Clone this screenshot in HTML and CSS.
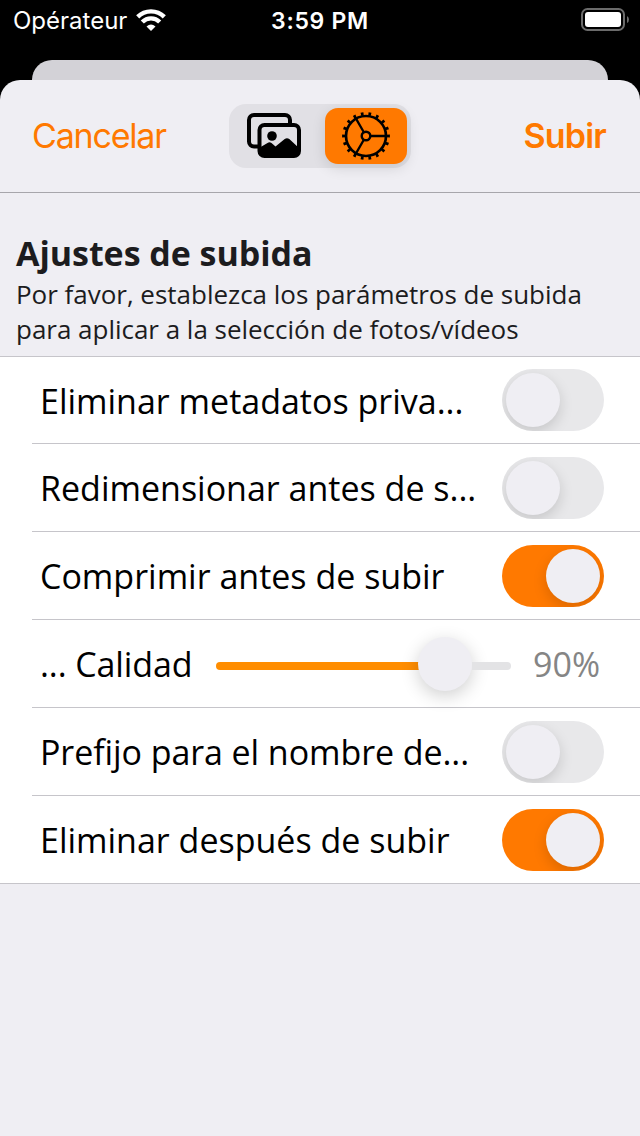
FILE: index.html
```html
<!DOCTYPE html>
<html lang="es">
<head>
<meta charset="utf-8">
<title>Ajustes de subida</title>
<link rel="stylesheet" href="styles.css">
</head>
<body>
<div class="status">
  <div class="carrier"><span class="carrier-name">Opérateur</span>
    <svg class="wifi" width="30" height="23" viewBox="0 0 30 23" fill="none" stroke="#fff">
      <path d="M1.700 7.900A18.800 18.800 0 0 1 28.300 7.900" stroke-width="4.400"/>
      <path d="M6.300 13A12.300 12.300 0 0 1 23.700 13" stroke-width="4.400"/>
      <path d="M15 22L10.500 17.500Q15 13.500 19.500 17.500Z" fill="#fff" stroke="none"/>
    </svg>
  </div>
  <div class="time">3:59 PM</div>
  <svg class="battery" width="50" height="24" viewBox="0 0 50 24">
    <rect x="1" y="1" width="42" height="21" rx="5.5" fill="none" stroke="#6b6b6b" stroke-width="2"/>
    <rect x="4" y="4" width="36" height="15" rx="3" fill="#fff"/>
    <path d="M46 8Q48 9 48 11.5T46 15Z" fill="#6b6b6b"/>
  </svg>
</div>
<div class="back-sheet"></div>
<main class="sheet">
  <header class="nav">
    <span class="cancel">Cancelar</span>
    <div class="segments">
      <div class="segment">
        <svg width="56" height="48" viewBox="0 0 56 48" fill="none" stroke="#000" stroke-width="4">
          <path d="M12 34.500H8a5 5 0 0 1-5-5V8a5 5 0 0 1 5-5h31a5 5 0 0 1 5 5v4"/>
          <rect x="13.500" y="13" width="39.500" height="31" rx="5"/>
          <circle cx="26" cy="24" r="4.800" fill="#000" stroke="none"/>
          <path d="M13 36l8.500-5q2-1.500 4 0l4 3.500 9.200-7.500q2.300-1.700 4.600 0L53 36v5q0 3-3 3H16q-3 0-3-3Z" fill="#000" stroke="none"/>
        </svg>
      </div>
      <div class="segment selected">
        <svg width="50" height="50" viewBox="-25 -25 50 50" fill="none" stroke="#000">
          <circle r="20" stroke-width="2.700"/>
          <circle r="22.200" stroke-width="3.400" pathLength="360" stroke-dasharray="7 13" stroke-dashoffset="3.500"/>
          <circle r="4.300" stroke-width="2.400"/>
          <path d="M4.500 0H20M-2.300-4L-10-17.300M-2.300 4L-10 17.300" stroke-width="2.300"/>
        </svg>
      </div>
    </div>
    <span class="upload">Subir</span>
  </header>
  <section class="intro">
    <h1 class="title">Ajustes de subida</h1>
    <p class="description">Por favor, establezca los parámetros de subida<br>para aplicar a la selección de fotos/vídeos</p>
  </section>
  <section class="list">
    <div class="row first"><span class="label">Eliminar metadatos priva...</span><div class="switch"><div class="knob"></div></div></div>
    <div class="row"><span class="label">Redimensionar antes de s...</span><div class="switch"><div class="knob"></div></div></div>
    <div class="row"><span class="label">Comprimir antes de subir</span><div class="switch on"><div class="knob"></div></div></div>
    <div class="row"><span class="label quality">... Calidad</span>
      <div class="slider"><div class="fill"></div><div class="knob thumb"></div><div class="rest"></div></div>
      <span class="value">90%</span></div>
    <div class="row"><span class="label prefix">Prefijo para el nombre de...</span><div class="switch"><div class="knob"></div></div></div>
    <div class="row"><span class="label">Eliminar después de subir</span><div class="switch on"><div class="knob"></div></div></div>
  </section>
</main>
</body>
</html>
```
FILE: styles.css
```css
* { box-sizing: border-box; }
body { margin: 0; width: 640px; height: 1136px; overflow: hidden; background: #000; display: flex; flex-direction: column; font-family: "Open Sans", "Noto Sans", sans-serif; }
.status { height: 60px; flex: none; display: grid; grid-template-columns: 1fr auto 1fr; align-items: start; color: #fff; font: 24px/42px Inter, sans-serif; }
.carrier { display: flex; padding-left: 13px; }
.carrier-name { width: 123px; white-space: nowrap; }
.wifi { margin-top: 9px; }
.time { font-weight: 600; font-size: 23px; letter-spacing: 0.7px; }
.battery { justify-self: end; margin: 8px 9px 0 0; }
.back-sheet { height: 20px; flex: none; margin: 0 32px; background: #d3d2d7; border-radius: 20px 20px 0 0; }
.sheet { flex: 1; background: #efeef3; border-radius: 20px 20px 0 0; }
.nav { height: 113px; border-bottom: 1px solid #a7a6ab; display: grid; grid-template-columns: 1fr 182px 1fr; align-items: center; padding: 0 33px; color: #ff7900; font: 34px/40px Inter, sans-serif; }
.cancel { letter-spacing: -1.2px; margin-left: -1px; }
.upload { justify-self: end; font-weight: 600; letter-spacing: -0.8px; margin-right: 1px; }
.segments { height: 64px; border-radius: 17px; background: #e1e0e5; display: flex; padding: 4px; justify-content: space-between; }
.segment { width: 82px; height: 56px; border-radius: 13px; display: flex; align-items: center; justify-content: center; }
.segment.selected { background: #ff7900; box-shadow: 0 4px 14px #0000001f; }
.intro { height: 164px; border-bottom: 1px solid #c6c5ca; padding: 37px 16px 0; color: #1c1c1e; }
.title { margin: 0 0 1px; font-size: 34px; line-height: 46px; font-weight: 700; letter-spacing: -0.05px; white-space: nowrap; }
.description { margin: 0; font-size: 26px; line-height: 35px; letter-spacing: -0.02px; white-space: nowrap; }
.list { background: #fff; border-bottom: 1px solid #c6c5ca; }
.row { height: 88px; margin-left: 32px; padding: 0 36px 0 8px; display: flex; align-items: center; justify-content: space-between; border-bottom: 1px solid #c6c5ca; font-size: 34px; }
.row.first { height: 87px; }
.row:last-child { border-bottom: 0; height: 87px; }
.label { white-space: nowrap; line-height: 46px; padding-top: 1px; }
.quality { width: 152px; flex: none; letter-spacing: -0.1px; }
.prefix { letter-spacing: -0.08px; }
.switch { width: 102px; height: 62px; border-radius: 31px; background: #e8e8ea; padding: 4px; display: flex; overflow: hidden; flex: none; }
.switch.on { background: #ff7900; justify-content: flex-end; }
.knob { width: 54px; height: 54px; border-radius: 50%; background: #efeef3; box-shadow: 0 5px 14px #00000026; flex: none; }
.slider { width: 295px; height: 62px; display: flex; align-items: center; margin: 4px 0 0 24px; }
.fill { width: 204px; height: 8px; margin-right: -2px; border-radius: 4px 0 0 4px; background: #ff8d00; }
.rest { flex: 1; height: 8px; border-radius: 0 4px 4px 0; background: #e3e3e5; }
.thumb { margin-bottom: 4px; box-shadow: 0 5px 18px #00000030; }
.value { color: #858585; margin-left: auto; padding: 1px 4px 0 0; }
```
